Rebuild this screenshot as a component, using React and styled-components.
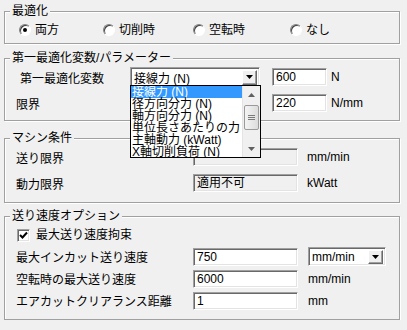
import React from 'react'
import styled, { createGlobalStyle } from 'styled-components'

const GlobalStyle = createGlobalStyle`
  body {
    margin: 0;
    background: #f0f0f0;
    font-family: "Liberation Sans", "Noto Sans CJK JP", sans-serif;
    font-size: 12px;
    color: #000;
  }
`

const Dialog = styled.div`
  width: 396px;
  padding: 4px 0 0 4px;
`

const Group = styled.fieldset`
  margin: ${p => p.$top || 0}px 0 0;
  padding: 0 0 ${p => p.$bottom || 0}px;
  border: 1px solid #a0a0a0;
  box-shadow: inset 1px 1px 0 #fff, 1px 1px 0 #fff;
  min-width: 0;
`

const Legend = styled.legend`
  margin-left: 5px;
  padding: 0 2px;
  line-height: 14px;
  background: #f0f0f0;
`

const RadioRow = styled.div`
  display: grid;
  grid-template-columns: 84px 90px 97px auto;
  padding: 5px 0 0 14px;
  height: 14px;
`

const RadioItem = styled.label`
  display: flex;
  align-items: center;
  gap: 4px;
  line-height: 14px;
`

const RadioDot = styled.span`
  width: 12px;
  height: 12px;
  box-sizing: border-box;
  border-radius: 50%;
  border: 1px solid;
  border-color: #808080 #fff #fff #808080;
  box-shadow: inset 1px 1px 0 #404040;
  background: #fff;
  display: flex;
  align-items: center;
  justify-content: center;

  &::after {
    content: '';
    width: 4px;
    height: 4px;
    border-radius: 50%;
    background: ${p => (p.$on ? '#000' : 'transparent')};
  }
`

const FormGrid = styled.div`
  display: grid;
  grid-template-columns: ${p => p.$cols};
  grid-auto-rows: ${p => p.$row}px;
  row-gap: ${p => p.$gap}px;
  align-items: center;
  padding-top: ${p => p.$pad || 0}px;
`

const Label = styled.span`
  padding-left: ${p => p.$indent}px;
  white-space: nowrap;
`

const Field = styled.div`
  width: ${p => p.$w}px;
  height: 18px;
  box-sizing: border-box;
  border: 1px solid;
  border-color: #a0a0a0 #fff #fff #a0a0a0;
  box-shadow: inset 1px 1px 0 #696969, inset -1px -1px 0 #e3e3e3;
  background: ${p => (p.$readOnly ? '#f0f0f0' : '#fff')};
  padding: 0 0 0 3px;
  line-height: 16px;
  white-space: nowrap;
`

const Unit = styled.span`
  white-space: nowrap;
`

const Combo = styled.div`
  position: relative;
  width: ${p => p.$w}px;
  height: ${p => p.$h}px;
  box-sizing: border-box;
  border: 1px solid;
  border-color: #a0a0a0 #fff #fff #a0a0a0;
  box-shadow: inset 1px 1px 0 #696969, inset -1px -1px 0 #e3e3e3;
  background: #fff;
  display: flex;
  align-items: center;
  padding: 0 2px 0 3px;
`

const ComboText = styled.span`
  flex: 1;
  white-space: nowrap;
`

const DropButton = styled.span`
  width: 15px;
  height: ${p => p.$h}px;
  box-sizing: border-box;
  background: #f0f0f0;
  border: 1px solid;
  border-color: #fff #696969 #696969 #fff;
  box-shadow: inset -1px -1px 0 #a0a0a0;
  display: flex;
  align-items: center;
  justify-content: center;
`

const DropList = styled.div`
  position: absolute;
  top: calc(100% - 1px);
  left: -1px;
  width: 131px;
  height: 73px;
  box-sizing: border-box;
  border: 1px solid #000;
  background: #fff;
  display: flex;
  z-index: 5;
`

const Items = styled.div`
  flex: 1;
  overflow: hidden;
`

const Item = styled.div`
  height: 12px;
  line-height: 12px;
  padding-left: 1px;
  white-space: nowrap;
  background: ${p => (p.$sel ? '#3399ff' : 'transparent')};
  color: ${p => (p.$sel ? '#fff' : '#000')};
`

const ScrollBar = styled.div`
  width: 17px;
  background: #f0f0f0;
  border-left: 1px solid #e4e4e4;
  display: flex;
  flex-direction: column;
  align-items: center;
`

const ScrollArrow = styled.div`
  height: 17px;
  display: flex;
  align-items: center;
  justify-content: center;
`

const Thumb = styled.div`
  margin-top: 2px;
  width: 15px;
  height: 25px;
  box-sizing: border-box;
  border: 1px solid #9a9a9a;
  border-radius: 2px;
  background: linear-gradient(to right, #f4f4f4, #dcdcdc);
  display: flex;
  flex-direction: column;
  align-items: center;
  justify-content: center;
  gap: 1px;

  span {
    width: 7px;
    height: 1px;
    background: #7a7a7a;
  }
`

const Spacer = styled.div`
  flex: 1;
`

const CheckRow = styled.label`
  display: flex;
  align-items: center;
  gap: 6px;
  height: 16px;
  padding: 4px 0 0 12px;
  line-height: 16px;
`

const CheckBox = styled.span`
  width: 13px;
  height: 13px;
  box-sizing: border-box;
  border: 1px solid;
  border-color: #a0a0a0 #fff #fff #a0a0a0;
  box-shadow: inset 1px 1px 0 #696969, inset -1px -1px 0 #e3e3e3;
  background: #fff;
  display: flex;
  align-items: center;
  justify-content: center;
`

const Arrow = ({ up, color = '#000' }) => (
  <svg width="7" height="4" viewBox="0 0 7 4">
    <polygon points={up ? '0,4 7,4 3.5,0' : '0,0 7,0 3.5,4'} fill={color} />
  </svg>
)

const Radio = ({ on, children }) => (
  <RadioItem>
    <RadioDot $on={on} />
    {children}
  </RadioItem>
)

const listItems = [
  '接線力 (N)',
  '径方向分力 (N)',
  '軸方向分力 (N)',
  '単位長さあたりの力 (N/mm)',
  '主軸動力 (kWatt)',
  'X軸切削負荷 (N)',
]

export default function App() {
  return (
    <Dialog>
      <GlobalStyle />

      <Group $bottom={6}>
        <Legend>最適化</Legend>
        <RadioRow>
          <Radio on>両方</Radio>
          <Radio>切削時</Radio>
          <Radio>空転時</Radio>
          <Radio>なし</Radio>
        </RadioRow>
      </Group>

      <Group $top={7} $bottom={7}>
        <Legend>第一最適化変数/パラメーター</Legend>
        <FormGrid $cols="125px 142px 59px 1fr" $row={20} $gap={6} $pad={2}>
          <Label $indent={15}>第一最適化変数</Label>
          <Combo $w={130} $h={20}>
            <ComboText>接線力 (N)</ComboText>
            <DropButton $h={15}>
              <Arrow />
            </DropButton>
            <DropList>
              <Items>
                {listItems.map((t, i) => (
                  <Item key={t} $sel={i === 0}>{t}</Item>
                ))}
              </Items>
              <ScrollBar>
                <ScrollArrow>
                  <Arrow up color="#606060" />
                </ScrollArrow>
                <Thumb>
                  <span />
                  <span />
                  <span />
                </Thumb>
                <Spacer />
                <ScrollArrow>
                  <Arrow color="#606060" />
                </ScrollArrow>
              </ScrollBar>
            </DropList>
          </Combo>
          <Field $w={55}>600</Field>
          <Unit>N</Unit>

          <Label $indent={11}>限界</Label>
          <span />
          <Field $w={55}>220</Field>
          <Unit>N/mm</Unit>
        </FormGrid>
      </Group>

      <Group $top={10} $bottom={10}>
        <Legend>マシン条件</Legend>
        <FormGrid $cols="188px 114px 1fr" $row={18} $gap={8} $pad={3}>
          <Label $indent={11}>送り限界</Label>
          <Field $w={105} $readOnly />
          <Unit>mm/min</Unit>

          <Label $indent={11}>動力限界</Label>
          <Field $w={105} $readOnly>適用不可</Field>
          <Unit>kWatt</Unit>
        </FormGrid>
      </Group>

      <Group $top={6} $bottom={9}>
        <Legend>送り速度オプション</Legend>
        <CheckRow>
          <CheckBox>
            <svg width="9" height="8" viewBox="0 0 9 8">
              <polyline points="1,4 3.5,6.5 8,1.5" fill="none" stroke="#000" strokeWidth="2" />
            </svg>
          </CheckBox>
          最大送り速度拘束
        </CheckRow>
        <FormGrid $cols="188px 115px 1fr" $row={19} $gap={3} $pad={4}>
          <Label $indent={11}>最大インカット送り速度</Label>
          <Field $w={105}>750</Field>
          <Combo $w={78} $h={19}>
            <ComboText>mm/min</ComboText>
            <DropButton $h={14}>
              <Arrow />
            </DropButton>
          </Combo>

          <Label $indent={11}>空転時の最大送り速度</Label>
          <Field $w={105}>6000</Field>
          <Unit>mm/min</Unit>

          <Label $indent={11}>エアカットクリアランス距離</Label>
          <Field $w={105}>1</Field>
          <Unit>mm</Unit>
        </FormGrid>
      </Group>
    </Dialog>
  )
}
